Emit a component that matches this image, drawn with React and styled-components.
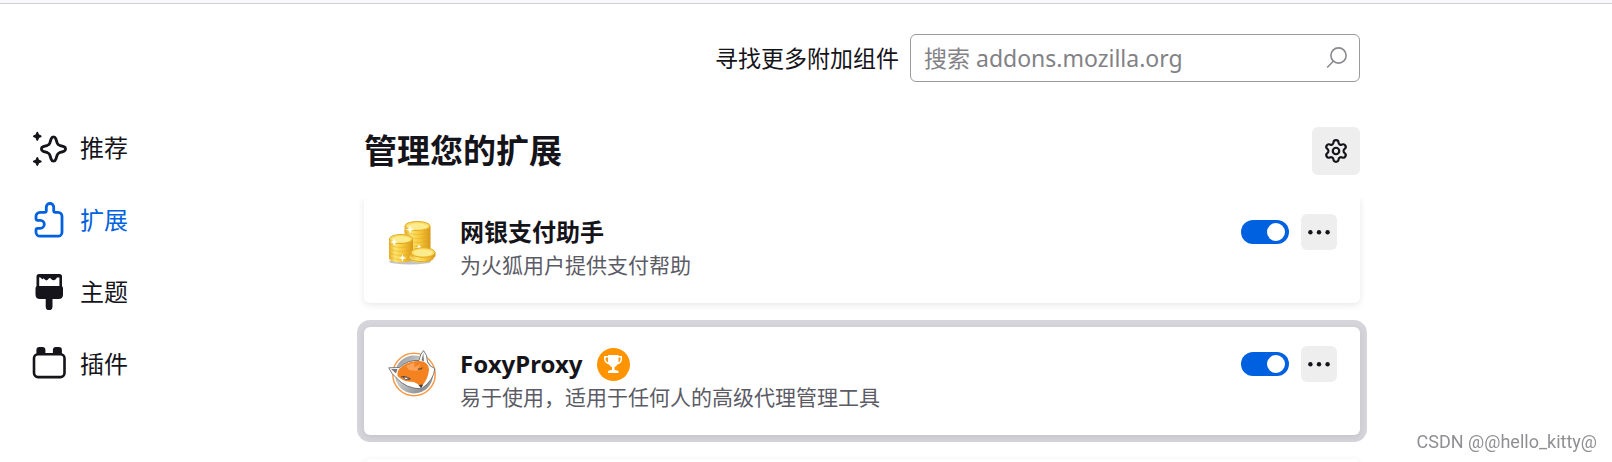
import { useState } from 'react';
import styled, { createGlobalStyle } from 'styled-components';
import { Settings } from 'lucide-react';

const GlobalStyle = createGlobalStyle`
  *, *::before, *::after {
    box-sizing: border-box;
  }
  body {
    margin: 0;
    background: #fff;
    color: #15141a;
    font-family: 'Noto Sans', 'Noto Sans CJK SC', sans-serif;
  }
`;

const Shell = styled.div`
  display: flex;
  flex-direction: column;
  height: 100vh;
  overflow: hidden;
`;

// bottom edge of the browser toolbar
const ToolbarEdge = styled.div`
  flex: none;
  height: 4px;
  border-bottom: 1px solid #cfcfd8;
  background: #f9f9fb;
`;

const Page = styled.div`
  display: flex;
  flex: 1;
  min-height: 0;
`;

const Sidebar = styled.nav`
  flex: 0 0 364px;
  padding: 108px 32px 0;
  a {
    display: flex;
    align-items: center;
    gap: 12px;
    height: 72px;
    color: #15141a;
    font-size: 24px;
    line-height: 36px;
    text-decoration: none;
  }
  a[aria-current] {
    color: #0061e0;
  }
`;

const Content = styled.main`
  display: flex;
  flex-direction: column;
  flex: 0 1 996px;
  min-width: 0;
`;

const SearchRow = styled.form`
  display: flex;
  align-items: center;
  justify-content: flex-end;
  gap: 11px;
  padding-top: 30px;
  label {
    font-size: 23px;
    line-height: 32px;
  }
`;

const SearchBox = styled.div`
  display: flex;
  align-items: center;
  width: 450px;
  height: 48px;
  padding: 0 10px 0 13px;
  border: 1px solid #9a9a9e;
  border-radius: 6px;
  input {
    flex: 1;
    min-width: 0;
    padding: 0;
    border: 0;
    outline: 0;
    background: transparent;
    color: #15141a;
    font: inherit;
    font-size: 23px;
    line-height: 32px;
  }
  input::placeholder {
    color: #828286;
    opacity: 1;
  }
`;

const HeadingRow = styled.header`
  display: flex;
  align-items: center;
  justify-content: space-between;
  padding: 45px 0 24px;
  h1 {
    margin: 0;
    font-size: 33px;
    line-height: 48px;
    font-weight: 700;
  }
`;

const IconButton = styled.button`
  display: flex;
  align-items: center;
  justify-content: center;
  flex: none;
  width: ${(props) => props.$size}px;
  height: ${(props) => props.$size}px;
  padding: 0;
  border: 0;
  border-radius: 6px;
  background: #eeeeee;
  color: #15141a;
  cursor: pointer;
`;

const ListViewport = styled.div`
  flex: 1;
  min-height: 0;
  margin: 0 -12px;
  padding: 0 12px;
  overflow: hidden;
`;

// the list is scrolled a little way under the heading
const AddonList = styled.div`
  display: flex;
  flex-direction: column;
  gap: 24px;
  margin-top: -4px;
`;

const Card = styled.article`
  display: flex;
  gap: 24px;
  min-height: 108px;
  padding: 19px 23px 21px 24px;
  border-radius: 6px;
  background: #fff;
  box-shadow: 0 2px 6px rgba(58, 57, 68, 0.12)
    ${(props) => props.$focused && ', 0 0 0 7px #d5d5db'};
  > svg {
    flex: none;
    margin-top: 4px;
  }
`;

const CardBody = styled.div`
  flex: 1;
  min-width: 0;
  p {
    margin: 0;
    color: #5b5b66;
    font-size: 21px;
    line-height: 30px;
  }
`;

const CardTop = styled.div`
  display: flex;
  align-items: center;
  gap: 14px;
  height: 36px;
  h2 {
    margin: 0;
    font-size: 24px;
    line-height: 36px;
    font-weight: 700;
  }
`;

const Actions = styled.div`
  display: flex;
  align-items: center;
  gap: 12px;
  margin-left: auto;
`;

const Toggle = styled.input`
  appearance: none;
  display: flex;
  align-items: center;
  width: 48px;
  height: 24px;
  margin: 0;
  padding: 0 4px;
  border-radius: 12px;
  background: #8f8f9d;
  cursor: pointer;
  &::before {
    content: '';
    width: 18px;
    height: 18px;
    border-radius: 50%;
    background: #fff;
  }
  &:checked {
    justify-content: flex-end;
    background: #0061e0;
  }
`;

const Watermark = styled.div`
  position: fixed;
  right: 15px;
  bottom: 8px;
  color: #909094;
  font-family: Roboto, 'Liberation Sans', sans-serif;
  font-size: 18px;
  line-height: 24px;
`;

const RecommendIcon = () => (
  <svg width="36" height="36" viewBox="0 0 36 36" aria-hidden="true">
    <g fill="currentColor">
      <path d="M5.3 1.8Q6 1.8 6.300 2.700L7 4.600L8.900 5.300Q10.600 6.300 8.900 7.300L7 8L6.300 9.900Q5.300 11.600 4.300 9.900L3.600 8L1.700 7.300Q0 6.300 1.700 5.300L3.600 4.600L4.300 2.700Q4.600 1.800 5.300 1.800Z" />
      <path d="M5.3 27Q6 27 6.300 27.900L7 29.800L8.900 30.500Q10.600 31.500 8.900 32.500L7 33.200L6.300 35.100Q5.300 36.800 4.300 35.100L3.600 33.200L1.700 32.500Q0 31.500 1.700 30.500L3.600 29.800L4.300 27.900Q4.600 27 5.300 27Z" />
    </g>
    <path
      d="M19.2 8.7C20 6.3 23 6.3 23.8 8.7L25.2 13Q25.8 14.7 27.5 15.3L31.8 16.7C34.2 17.5 34.2 20.5 31.8 21.3L27.5 22.7Q25.8 23.3 25.2 25L23.8 29.3C23 31.7 20 31.7 19.2 29.3L17.8 25Q17.2 23.3 15.5 22.7L11.2 21.3C8.8 20.5 8.8 17.5 11.2 16.7L15.5 15.3Q17.2 14.7 17.8 13Z"
      fill="none"
      stroke="currentColor"
      strokeWidth="2.8"
    />
  </svg>
);

const ExtensionIcon = () => (
  <svg width="36" height="36" viewBox="0 0 36 36" aria-hidden="true">
    <path
      d="M8 10.3H12.5Q14.3 10.3 14.3 8.5V5.2a3.7 3.7 0 0 1 7.4 0V8.5Q21.7 10.3 23.5 10.3H26a4 4 0 0 1 4 4V30.2a4 4 0 0 1-4 4H8a4 4 0 0 1-4-4V28Q4 26.3 5.7 26.3H8.3a4 4 0 0 0 0-8H5.7Q4 18.3 4 16.6V14.3a4 4 0 0 1 4-4Z"
      fill="none"
      stroke="currentColor"
      strokeWidth="2.8"
    />
  </svg>
);

const ThemeIcon = () => (
  <svg width="36" height="36" viewBox="0 0 36 36" aria-hidden="true">
    <path
      fill="currentColor"
      fillRule="evenodd"
      d="M7 0H27.5Q30 0 30 2.5V12Q31 13 31 14.5V20.5Q31 25 26.5 25H20.5V32.8a3.4 3.4 0 0 1-6.8 0V25H8Q3.500 25 3.500 20.5V14.5Q3.500 13 4.500 12V2.5Q4.500 0 7 0ZM7.200 3.200V12H27.4V3.500L25 3.600Q24.2 6 22 6.200Q20 6.600 18.8 4.600Q17.8 3.600 16.8 4.600Q15 7.600 12.8 5.600L11.5 4.200Q10.2 6.400 9 3.700Z"
    />
  </svg>
);

const PluginIcon = () => (
  <svg width="36" height="36" viewBox="0 0 36 36" aria-hidden="true">
    <rect x="2" y="8.3" width="30.5" height="22.8" rx="4" fill="none" stroke="currentColor" strokeWidth="2.6" />
    <path
      fill="currentColor"
      d="M4.4 9V4Q4.4 1 7.4 1H10.4Q13.4 1 13.4 4V9ZM20.9 9V4Q20.9 1 23.9 1H26.9Q29.9 1 29.9 4V9Z"
    />
  </svg>
);

const SearchIcon = () => (
  <svg width="24" height="26" viewBox="0 0 24 26" fill="none" stroke="#8a8a8e" strokeWidth="1.6" aria-hidden="true">
    <circle cx="13.5" cy="10.5" r="7.6" />
    <path d="M8.3 16.2L2.2 22.5" />
  </svg>
);

const DotsIcon = () => (
  <svg width="24" height="24" viewBox="0 0 24 24" fill="currentColor" aria-hidden="true">
    <circle cx="3.4" cy="12.3" r="2.2" />
    <circle cx="12" cy="12.3" r="2.2" />
    <circle cx="20.6" cy="12.3" r="2.2" />
  </svg>
);

const CoinStack = ({ x, y, rx, ry, height }) => (
  <g>
    <path
      fill="url(#gold)"
      d={`M${x - rx} ${y}v${height}a${rx} ${ry} 0 0 0 ${rx * 2} 0v${-height}Z`}
    />
    {[4, 8, 12, 16].filter((step) => step < height + 1).map((step) => (
      <path
        key={step}
        fill="none"
        stroke="#d99a1c"
        strokeOpacity=".4"
        strokeWidth=".8"
        d={`M${x - rx} ${y + step}a${rx} ${ry} 0 0 0 ${rx * 2} 0`}
      />
    ))}
    <ellipse cx={x} cy={y} rx={rx - 0.5} ry={ry} fill="#f9dc62" stroke="#e3aa25" />
    <ellipse cx={x} cy={y + 0.4} rx={rx - 3} ry={ry - 1.4} fill="#fdec8e" />
  </g>
);

const CoinsIcon = () => (
  <svg width="48" height="48" viewBox="0 0 48 48" aria-hidden="true">
    <defs>
      <linearGradient id="gold">
        <stop offset="0" stopColor="#e8ac26" />
        <stop offset=".25" stopColor="#fde46c" />
        <stop offset=".6" stopColor="#f6c638" />
        <stop offset="1" stopColor="#d9981a" />
      </linearGradient>
    </defs>
    <ellipse cx="22" cy="43.5" rx="21" ry="3" fill="#777" opacity=".45" />
    <CoinStack x={29.5} y={8} rx={13} ry={4.5} height={22} />
    <CoinStack x={13} y={21} rx={12} ry={4.5} height={19} />
    <CoinStack x={33} y={39} rx={12.5} ry={4.5} height={1} />
    <CoinStack x={35} y={34.5} rx={12.5} ry={4.8} height={3} />
    <path
      fill="#fff"
      d="M22 7l1 3.5 3.5 1-3.5 1-1 3.5-1-3.5-3.5-1 3.5-1ZM6 20l1 3 3 1-3 1-1 3-1-3-3-1 3-1ZM14.5 36l1 3 3 1-3 1-1 3-1-3-3-1 3-1ZM31 26l.8 2.2 2.2.8-5.5 1 1.7-1.8Z"
    />
  </svg>
);

const FoxIcon = () => (
  <svg width="48" height="48" viewBox="0 0 48 48" aria-hidden="true">
    <defs>
      <linearGradient id="disc" x1="0" y1="0" x2="1" y2="1">
        <stop offset="0" stopColor="#8b8d90" />
        <stop offset=".4" stopColor="#c9cacc" />
        <stop offset="1" stopColor="#77797c" />
      </linearGradient>
    </defs>
    <circle cx="26" cy="24.5" r="21.2" fill="#fff" stroke="#f79a48" strokeWidth="1.5" />
    <circle cx="26" cy="24.5" r="19" fill="url(#disc)" />
    <path
      fill="#fff"
      stroke="#6a6c6f"
      strokeWidth=".9"
      strokeLinejoin="round"
      d="M.7 17.8L11.5 17.5Q20 9.5 31 10.5Q32 4 35.500.6Q39.5 4.500 39.500 12Q42 17 46.800 18.500Q46 30 33.500 38.800Q18 39 8 27.500Q3.500 24 .7 17.8Z"
    />
    <path
      fill="#f58220"
      d="M11.5 18.500Q20 10 32 11Q40.500 11.500 41 19.500Q40.500 29 33 37Q28 31.500 22 31.800Q15 31.500 9.500 26Q9 21.500 11.5 18.500Z"
    />
    <path fill="#f9a35a" d="M18 16L26 12.500L26.500 17.500L32.500 14L29 21L21 20Z" />
    <path fill="#77797c" d="M35.300 3L33.500 10.300L36 11.500ZM3 19L9.500 19L8 23.500Z" />
    <path fill="none" stroke="#5b4a3c" strokeWidth="1.100" d="M13 27Q17 25.500 22.500 29M30 18.800Q33 19.800 34.500 17.500" />
    <path fill="#fff" stroke="#49494c" strokeWidth=".8" d="M15 27.500Q18 26 21.500 29.500Q17 30.500 15 27.500Z" />
    <path fill="#3c3c3f" d="M30.500 35L35 34.500L33.300 38.500Z" />
  </svg>
);

const TrophyBadge = () => (
  <svg width="33" height="33" viewBox="0 0 33 33" role="img" aria-label="推荐扩展">
    <circle cx="16.5" cy="16.5" r="16.5" fill="#ff9400" />
    <path
      fill="#fff"
      fillRule="evenodd"
      d="M11 7H21.500V8H25V11.500Q24.500 15.500 20.500 16.500Q19 18.500 17.500 19.300V21.800L21.500 23V25H11V23L15 21.800V19.300Q13.500 18.500 12 16.500Q8 15.500 7 11.500V8H11ZM8.600 9.600V11.500Q9 13.600 11 14.600V9.600ZM21.500 9.600V14.600Q23.300 13.600 23.500 11.500V9.600Z"
    />
  </svg>
);

const navItems = [
  { label: '推荐', Icon: RecommendIcon },
  { label: '扩展', Icon: ExtensionIcon, current: true },
  { label: '主题', Icon: ThemeIcon },
  { label: '插件', Icon: PluginIcon },
];

const addons = [
  { name: '网银支付助手', text: '为火狐用户提供支付帮助', Icon: CoinsIcon },
  {
    name: 'FoxyProxy',
    text: '易于使用，适用于任何人的高级代理管理工具',
    Icon: FoxIcon,
    recommended: true,
    focused: true,
  },
];

function AddonCard({ name, text, Icon, recommended, focused }) {
  const [enabled, setEnabled] = useState(true);

  return (
    <Card $focused={focused}>
      <Icon />
      <CardBody>
        <CardTop>
          <h2>{name}</h2>
          {recommended && <TrophyBadge />}
          <Actions>
            <Toggle
              type="checkbox"
              aria-label={name}
              checked={enabled}
              onChange={(e) => setEnabled(e.target.checked)}
            />
            <IconButton type="button" $size={36} aria-haspopup="menu">
              <DotsIcon />
            </IconButton>
          </Actions>
        </CardTop>
        <p>{text}</p>
      </CardBody>
    </Card>
  );
}

export default function App() {
  return (
    <Shell>
      <GlobalStyle />
      <ToolbarEdge />
      <Page>
        <Sidebar>
          {navItems.map(({ label, Icon, current }) => (
            <a href="#" key={label} aria-current={current ? 'page' : undefined}>
              <Icon />
              {label}
            </a>
          ))}
        </Sidebar>
        <Content>
          <SearchRow role="search">
            <label htmlFor="search-addons">寻找更多附加组件</label>
            <SearchBox>
              <input id="search-addons" type="text" placeholder="搜索 addons.mozilla.org" />
              <SearchIcon />
            </SearchBox>
          </SearchRow>
          <HeadingRow>
            <h1>管理您的扩展</h1>
            <IconButton type="button" $size={48} aria-haspopup="menu">
              <Settings size={26} strokeWidth={2} />
            </IconButton>
          </HeadingRow>
          <ListViewport>
            <AddonList>
              {addons.map((addon) => (
                <AddonCard key={addon.name} {...addon} />
              ))}
              <Card />
            </AddonList>
          </ListViewport>
        </Content>
      </Page>
      <Watermark>CSDN @@hello_kitty@</Watermark>
    </Shell>
  );
}
